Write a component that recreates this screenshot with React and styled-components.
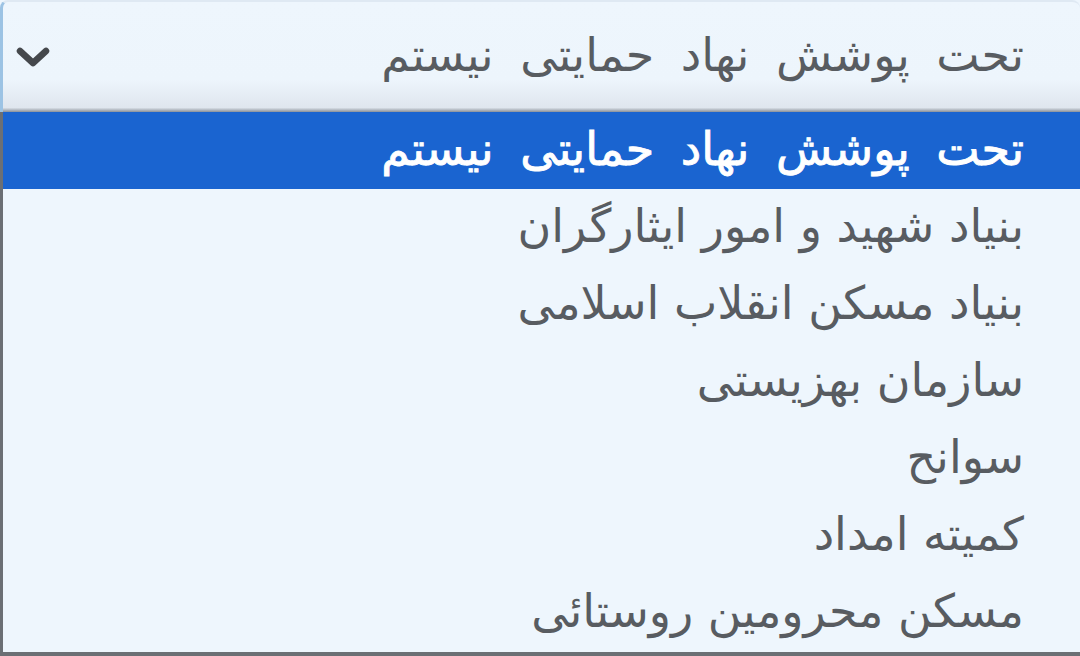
import React from "react";
import styled, { createGlobalStyle } from "styled-components";

const Global = createGlobalStyle`
  html, body { margin: 0; padding: 0; }
  body {
    width: 1080px;
    height: 656px;
    overflow: hidden;
    background: #eef6fd;
    font-family: "DejaVu Sans", "Noto Sans", sans-serif;
  }
`;

const Wrap = styled.div`
  display: flex;
  flex-direction: column;
  width: 1080px;
  height: 656px;
`;

const SelectBox = styled.div`
  box-sizing: border-box;
  height: 112px;
  display: flex;
  align-items: center;
  justify-content: space-between;
  direction: rtl;
  padding: 0 56px 4px 12px;
  background: linear-gradient(to bottom, #eef6fd 0%, #edf5fc 70%, #dfe6ee 96%, #8a9099 100%);
  border-left: 3px solid #9cc3e4;
  border-top: 2px solid #dfe9f3;
  border-radius: 8px 8px 0 0;
`;

const SelectText = styled.span`
  font-size: 46px;
  color: #585c61;
  line-height: 1;
  word-spacing: 12px;
`;

const Chevron = styled.svg`
  width: 36px;
  height: 26px;
  margin-top: 4px;
`;

const List = styled.ul`
  list-style: none;
  margin: 0;
  padding: 0;
  flex: 1;
  display: flex;
  flex-direction: column;
  direction: rtl;
  border-left: 3px solid #6b6f74;
  border-bottom: 4px solid #6b6f74;
  background: #eef6fd;
`;

const Option = styled.li`
  box-sizing: border-box;
  height: 77px;
  display: flex;
  align-items: center;
  padding: 0 56px 4px 0;
  font-size: 46px;
  line-height: 1;
  color: ${(p) => (p.$active ? "#ffffff" : "#585c61")};
  background: ${(p) => (p.$active ? "#1a64d0" : "transparent")};
  word-spacing: ${(p) => (p.$active ? "12px" : "normal")};
  -webkit-text-stroke: ${(p) => (p.$active ? "0.9px #ffffff" : "0")};
`;

const options = [
  "تحت پوشش نهاد حمایتی نیستم",
  "بنیاد شهید و امور ایثارگران",
  "بنیاد مسکن انقلاب اسلامی",
  "سازمان بهزیستی",
  "سوانح",
  "کمیته امداد",
  "مسکن محرومین روستائی",
];

export default function App() {
  return (
    <>
      <Global />
      <Wrap>
        <SelectBox>
          <SelectText>{options[0]}</SelectText>
          <Chevron viewBox="0 0 36 26">
            <polyline
              points="5,7 18,19 31,7"
              fill="none"
              stroke="#45484c"
              strokeWidth="6.5"
              strokeLinecap="round"
              strokeLinejoin="round"
            />
          </Chevron>
        </SelectBox>
        <List>
          {options.map((o, i) => (
            <Option key={o} $active={i === 0}>
              {o}
            </Option>
          ))}
        </List>
      </Wrap>
    </>
  );
}
